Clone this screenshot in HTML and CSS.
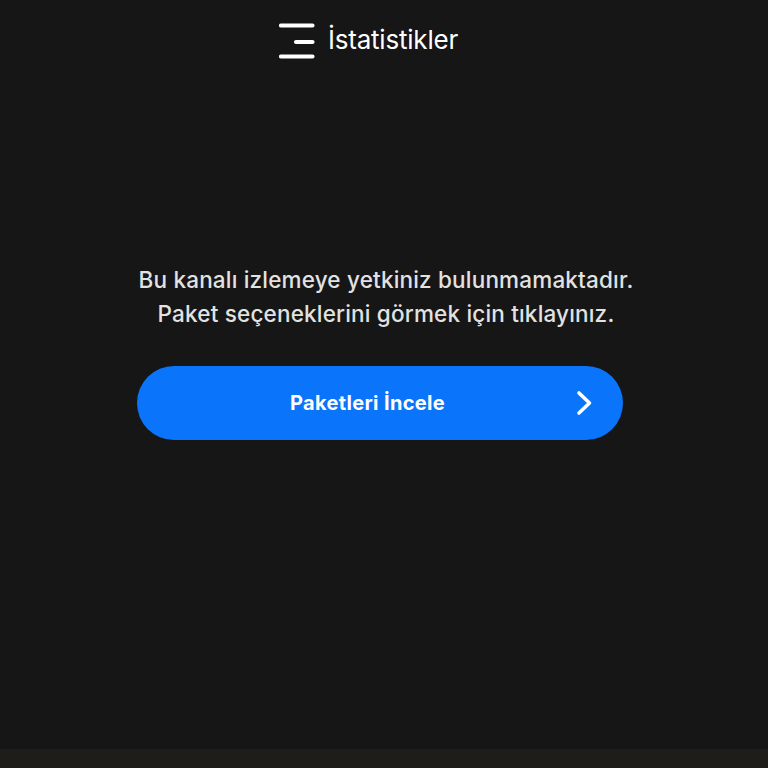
FILE: index.html
```html
<!DOCTYPE html>
<html lang="tr">
<head>
<meta charset="utf-8">
<link rel="stylesheet" href="styles.css">
</head>
<body>
<div class="page">
  <header class="header">
    <svg class="logo" width="36" height="38" viewBox="0 0 36 38">
      <line x1="2" y1="4.5" x2="33.5" y2="4.5" stroke="#fff" stroke-width="4.2" stroke-linecap="round"/>
      <line x1="17" y1="21" x2="33.5" y2="21" stroke="#fff" stroke-width="4.2" stroke-linecap="round"/>
      <line x1="2" y1="35.5" x2="33.5" y2="35.5" stroke="#fff" stroke-width="4.2" stroke-linecap="round"/>
    </svg>
    <span class="title">İstatistikler</span>
  </header>
  <main class="main">
    <p class="message">Bu kanalı izlemeye yetkiniz bulunmamaktadır.<br>Paket seçeneklerini görmek için tıklayınız.</p>
    <button class="cta">
      <span class="cta-label">Paketleri İncele</span>
      <svg class="chev" width="18" height="26" viewBox="0 0 18 26">
        <polyline points="3,3 13.5,13 3,23" fill="none" stroke="#fff" stroke-width="3.6" stroke-linecap="round" stroke-linejoin="round"/>
      </svg>
    </button>
  </main>
  <div class="bottom"></div>
</div>
</body>
</html>
```
FILE: styles.css
```css
html, body {
  margin: 0;
  padding: 0;
  background: #161616;
}
.page {
  width: 768px;
  height: 768px;
  display: flex;
  flex-direction: column;
  font-family: Inter, "Noto Sans", sans-serif;
}
.header {
  height: 80px;
  display: flex;
  align-items: center;
  justify-content: center;
  gap: 13px;
  padding-right: 31px;
  box-sizing: border-box;
}
.logo {
  display: block;
  margin-top: -1px;
}
.title {
  color: #ffffff;
  font-size: 26px;
  font-weight: 400;
  letter-spacing: -0.2px;
  margin-top: -1px;
}
.main {
  flex: 1;
  display: flex;
  flex-direction: column;
  align-items: center;
  padding-top: 183px;
}
.message {
  margin: 0;
  color: #e2e2e2;
  font-size: 22.5px;
  font-weight: 450;
  line-height: 34px;
  text-align: center;
  letter-spacing: 0.18px;
  padding-left: 4px;
}
.cta {
  margin-top: 35px;
  width: 486px;
  height: 74px;
  margin-left: -9px;
  padding: 0 24px 0 0;
  border: none;
  border-radius: 37px;
  background: #0a74fb;
  position: relative;
  display: flex;
  align-items: center;
  justify-content: center;
  font-family: inherit;
  cursor: pointer;
}
.cta-label {
  color: #ffffff;
  font-size: 20px;
  font-weight: 700;
  letter-spacing: 0.35px;
}
.chev {
  position: absolute;
  right: 29px;
  top: 24px;
}
.bottom {
  height: 19px;
  background: #1e1d19;
}
```
